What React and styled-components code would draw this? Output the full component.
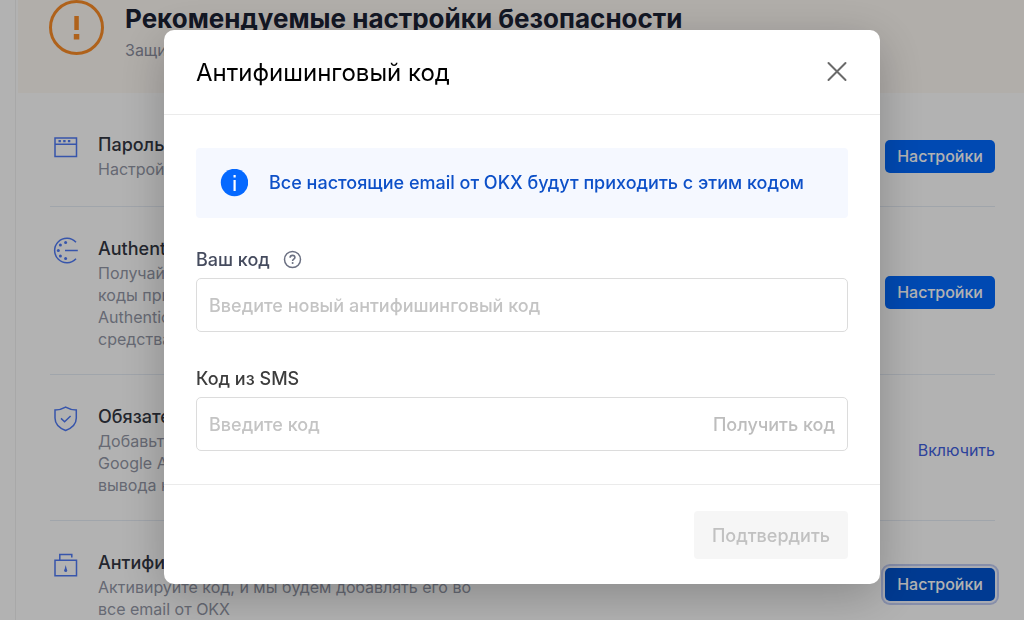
import React from 'react'
import styled, { createGlobalStyle, css } from 'styled-components'

const GlobalStyle = createGlobalStyle`
  * {
    box-sizing: border-box;
  }

  body {
    margin: 0;
    height: 100vh;
    overflow: hidden;
    background-color: #ffffff;
    color: #14171f;
    font-family: Inter, 'Noto Sans', sans-serif;
    font-size: 16px;
  }

  button,
  input {
    font-family: inherit;
  }

  h1, h2, h3, p, ul {
    margin: 0;
    padding: 0;
    font-weight: 400;
  }
`

const Page = styled.main`
  height: 100vh;
  overflow: hidden;
  margin-left: 15px;
  border-left: 1px solid #f1f1f1;
`

const Notice = styled.section`
  height: 93px;
  margin-left: 2px;
  padding-left: 31px;
  background-color: #fef9f4;
  display: flex;
  gap: 20px;
`

const NoticeIcon = styled.svg`
  flex: none;
  width: 56px;
  height: 56px;
`

const NoticeTitle = styled.h1`
  font-size: 26px;
  line-height: 38px;
  font-weight: 700;
  color: #1b2234;
`

const NoticeText = styled.p`
  font-size: 16px;
  line-height: 24px;
  color: #8b8f9f;
`

const SettingList = styled.ul`
  list-style: none;
  padding: 10px 29px 0 34px;
`

const SettingRow = styled.li`
  min-height: 104px;
  padding: 29px 0 24px;
  border-bottom: 1px solid #e6ecf5;
  display: flex;
  align-items: flex-start;
  gap: 16px;
`

const SettingIcon = styled.svg`
  flex: none;
  width: 32px;
  height: 32px;
  fill: none;
  stroke: #4f7af5;
  stroke-width: 1.5;
`

const SettingBody = styled.div`
  flex: 1;
`

const SettingTitle = styled.h3`
  font-size: 18px;
  line-height: 26px;
  font-weight: 500;
  color: #333743;
`

const SettingText = styled.p`
  font-size: 16px;
  line-height: 22px;
  color: #9397a6;
  white-space: pre-line;
`

const SettingButton = styled.button`
  align-self: center;
  height: 33px;
  margin-bottom: 2px;
  padding: 0 12px;
  border: 0;
  border-radius: 5px;
  background-color: #0069ff;
  color: #ffffff;
  font-size: 16px;
  font-weight: 500;
  cursor: pointer;

  ${({ $focused }) =>
    $focused &&
    css`
      background-color: #0054d1;
      box-shadow: 0 0 0 2px #f2f5ff, 0 0 0 4px #c0ccf4;
    `}
`

const SettingLink = styled.a`
  align-self: center;
  color: #3f5fe0;
  font-size: 16px;
  text-decoration: none;
`

const Overlay = styled.div`
  position: fixed;
  inset: 0;
  padding: 30px 0 0 20px;
  background-color: rgba(0, 0, 0, 0.3);
  display: flex;
  justify-content: center;
  align-items: flex-start;
`

const Dialog = styled.form`
  width: 716px;
  border-radius: 10px;
  background-color: #ffffff;
  box-shadow: 0 12px 48px rgba(0, 0, 0, 0.24);
`

const DialogHeader = styled.header`
  height: 85px;
  padding: 0 32px;
  border-bottom: 1px solid #ebebeb;
  display: flex;
  align-items: center;
  justify-content: space-between;
`

const DialogTitle = styled.h2`
  padding-top: 2px;
  font-size: 24px;
  line-height: 32px;
  color: #000000;
`

const CloseButton = styled.button`
  width: 22px;
  height: 22px;
  padding: 0;
  border: 0;
  background-color: transparent;
  color: #6a6a6a;
  cursor: pointer;

  > svg {
    display: block;
  }
`

const DialogBody = styled.div`
  padding: 33px 32px;
`

const Hint = styled.div`
  height: 70px;
  margin-bottom: 28px;
  padding: 0 24px;
  border-radius: 4px;
  background-color: #f5f8ff;
  color: #0d50c8;
  font-size: 18px;
  line-height: 24px;
  font-weight: 500;
  display: flex;
  align-items: center;
  gap: 21px;
`

const Field = styled.div`
  & + & {
    margin-top: 33px;
  }
`

const LabelRow = styled.div`
  height: 28px;
  margin-bottom: 4px;
  display: flex;
  align-items: center;
  gap: 12px;
`

const Label = styled.label`
  color: ${({ $muted }) => ($muted ? '#454b5e' : '#3d3d3d')};
  font-size: 18px;
  line-height: 28px;
  font-weight: 500;
`

const InputBox = styled.div`
  height: 54px;
  padding: 0 12px;
  border: 1px solid #dcdcdc;
  border-radius: 5px;
  display: flex;
  align-items: center;
`

const Input = styled.input`
  flex: 1;
  min-width: 0;
  height: 100%;
  padding: 0;
  border: 0;
  outline: 0;
  background-color: transparent;
  font-size: 18px;
  font-weight: 500;

  &::placeholder {
    color: #c4c4c4;
    opacity: 1;
  }
`

const CodeButton = styled.button`
  padding: 0;
  border: 0;
  background-color: transparent;
  color: #bdbdbd;
  font-size: 18px;
  font-weight: 500;
`

const DialogFooter = styled.footer`
  padding: 26px 32px 25px;
  border-top: 1px solid #ebebeb;
  display: flex;
  justify-content: flex-end;
`

const SubmitButton = styled.button`
  height: 48px;
  padding: 0 18px;
  border: 0;
  border-radius: 4px;
  background-color: #f6f6f6;
  color: #c1c1c1;
  font-size: 18px;
  font-weight: 500;
`

const icons = {
  password: (
    <>
      <path d="M5 6h21.5v18.500H5zM5 12.300h21.500" />
      <path d="M8.500 9.200h2.400M13.200 9.200h2.400M17.900 9.200h2.400" strokeWidth="2.200" />
    </>
  ),
  authenticator: (
    <>
      <path d="M26 6.200a12.300 12.300 0 1 0 0 16.600M15 14.500h12.800" />
      <g fill="#4f7af5" stroke="none">
        <circle cx="15.600" cy="6.400" r="1.500" />
        <circle cx="10.400" cy="9" r="1.500" />
        <circle cx="8.300" cy="14.500" r="1.500" />
        <circle cx="10.400" cy="19.900" r="1.500" />
        <circle cx="15.600" cy="22.600" r="1.500" />
      </g>
    </>
  ),
  shield: (
    <path d="M15.600 3.200c3.300 1.900 6.800 2.800 10.700 2.900V14c0 6-3.600 9.800-10.700 12.500C8.600 23.800 5 20 5 14V6.100c3.900-.1 7.400-1 10.600-2.900zM11 14.400l3.600 3.300 6-5.700" />
  ),
  lock: (
    <>
      <path d="M5 10.300h21.500v15.500H5zM9.800 10.300V4.500h12v3" />
      <path d="M15.700 15l1.400 5.800h-2.800z" fill="#4f7af5" stroke="none" />
      <circle cx="15.700" cy="20.400" r="1.500" fill="#4f7af5" stroke="none" />
    </>
  ),
}

const settings = [
  {
    icon: 'password',
    title: 'Пароль',
    text: 'Настройки',
    action: 'button',
  },
  {
    icon: 'authenticator',
    title: 'Authent',
    text: 'Получайте\nкоды при\nAuthentic\nсредства',
    action: 'button',
  },
  {
    icon: 'shield',
    title: 'Обязател',
    text: 'Добавьте\nGoogle Auth\nвывода на',
    action: 'link',
  },
  {
    icon: 'lock',
    title: 'Антифишинг',
    text: 'Активируйте код, и мы будем добавлять его во\nвсе email от OKX',
    action: 'button',
    focused: true,
  },
]

function Setting({ icon, title, text, action, focused }) {
  return (
    <SettingRow>
      <SettingIcon viewBox="0 0 32 32">{icons[icon]}</SettingIcon>
      <SettingBody>
        <SettingTitle>{title}</SettingTitle>
        <SettingText>{text}</SettingText>
      </SettingBody>
      {action === 'link' ? (
        <SettingLink href="#enable">Включить</SettingLink>
      ) : (
        <SettingButton type="button" $focused={focused}>
          Настройки
        </SettingButton>
      )}
    </SettingRow>
  )
}

function AntiPhishingDialog() {
  return (
    <Overlay>
      <Dialog
        role="dialog"
        aria-labelledby="dialog-title"
        onSubmit={(e) => e.preventDefault()}
      >
        <DialogHeader>
          <DialogTitle id="dialog-title">Антифишинговый код</DialogTitle>
          <CloseButton type="button" aria-label="Закрыть">
            <svg width="22" height="22" viewBox="0 0 22 22">
              <path
                d="M2.500 2l17 17M19.500 2l-17 17"
                stroke="currentColor"
                strokeWidth="2"
                strokeLinecap="round"
              />
            </svg>
          </CloseButton>
        </DialogHeader>
        <DialogBody>
          <Hint>
            <svg width="28" height="28" viewBox="0 0 28 28">
              <circle cx="14.500" cy="13.500" r="13.700" fill="#0569ff" />
              <path d="M13.500 6h2.200v2.600h-2.200zM13.500 11h2.200v11h-2.200z" fill="#ffffff" />
            </svg>
            Все настоящие email от OKX будут приходить с этим кодом
          </Hint>
          <Field>
            <LabelRow>
              <Label htmlFor="new-code" $muted>
                Ваш код
              </Label>
              <svg width="20" height="20" viewBox="0 0 20 20" fill="none" stroke="#6b7082">
                <circle cx="10.500" cy="9.500" r="8" strokeWidth="1.500" />
                <path
                  d="M8.100 7.700c0-1.500 1-2.300 2.400-2.300s2.400.8 2.400 2.100c0 1.700-2.300 1.700-2.300 3.400"
                  strokeWidth="1.600"
                />
                <circle cx="10.600" cy="13" r="1" fill="#6b7082" stroke="none" />
              </svg>
            </LabelRow>
            <InputBox>
              <Input id="new-code" placeholder="Введите новый антифишинговый код" />
            </InputBox>
          </Field>
          <Field>
            <LabelRow>
              <Label htmlFor="sms-code">Код из SMS</Label>
            </LabelRow>
            <InputBox>
              <Input id="sms-code" placeholder="Введите код" />
              <CodeButton type="button">Получить код</CodeButton>
            </InputBox>
          </Field>
        </DialogBody>
        <DialogFooter>
          <SubmitButton type="submit" disabled>
            Подтвердить
          </SubmitButton>
        </DialogFooter>
      </Dialog>
    </Overlay>
  )
}

export default function App() {
  return (
    <>
      <GlobalStyle />
      <Page>
        <Notice>
          <NoticeIcon viewBox="0 0 56 56">
            <circle cx="27.500" cy="27.500" r="26" fill="none" stroke="#fb8d28" strokeWidth="3" />
            <path d="M25.300 16h4.500v14h-4.500zM24.800 34h5.500v5.500h-5.500z" fill="#fb8d28" />
          </NoticeIcon>
          <div>
            <NoticeTitle>Рекомендуемые настройки безопасности</NoticeTitle>
            <NoticeText>Защитите</NoticeText>
          </div>
        </Notice>
        <SettingList>
          {settings.map((item) => (
            <Setting key={item.icon} {...item} />
          ))}
        </SettingList>
      </Page>
      <AntiPhishingDialog />
    </>
  )
}
